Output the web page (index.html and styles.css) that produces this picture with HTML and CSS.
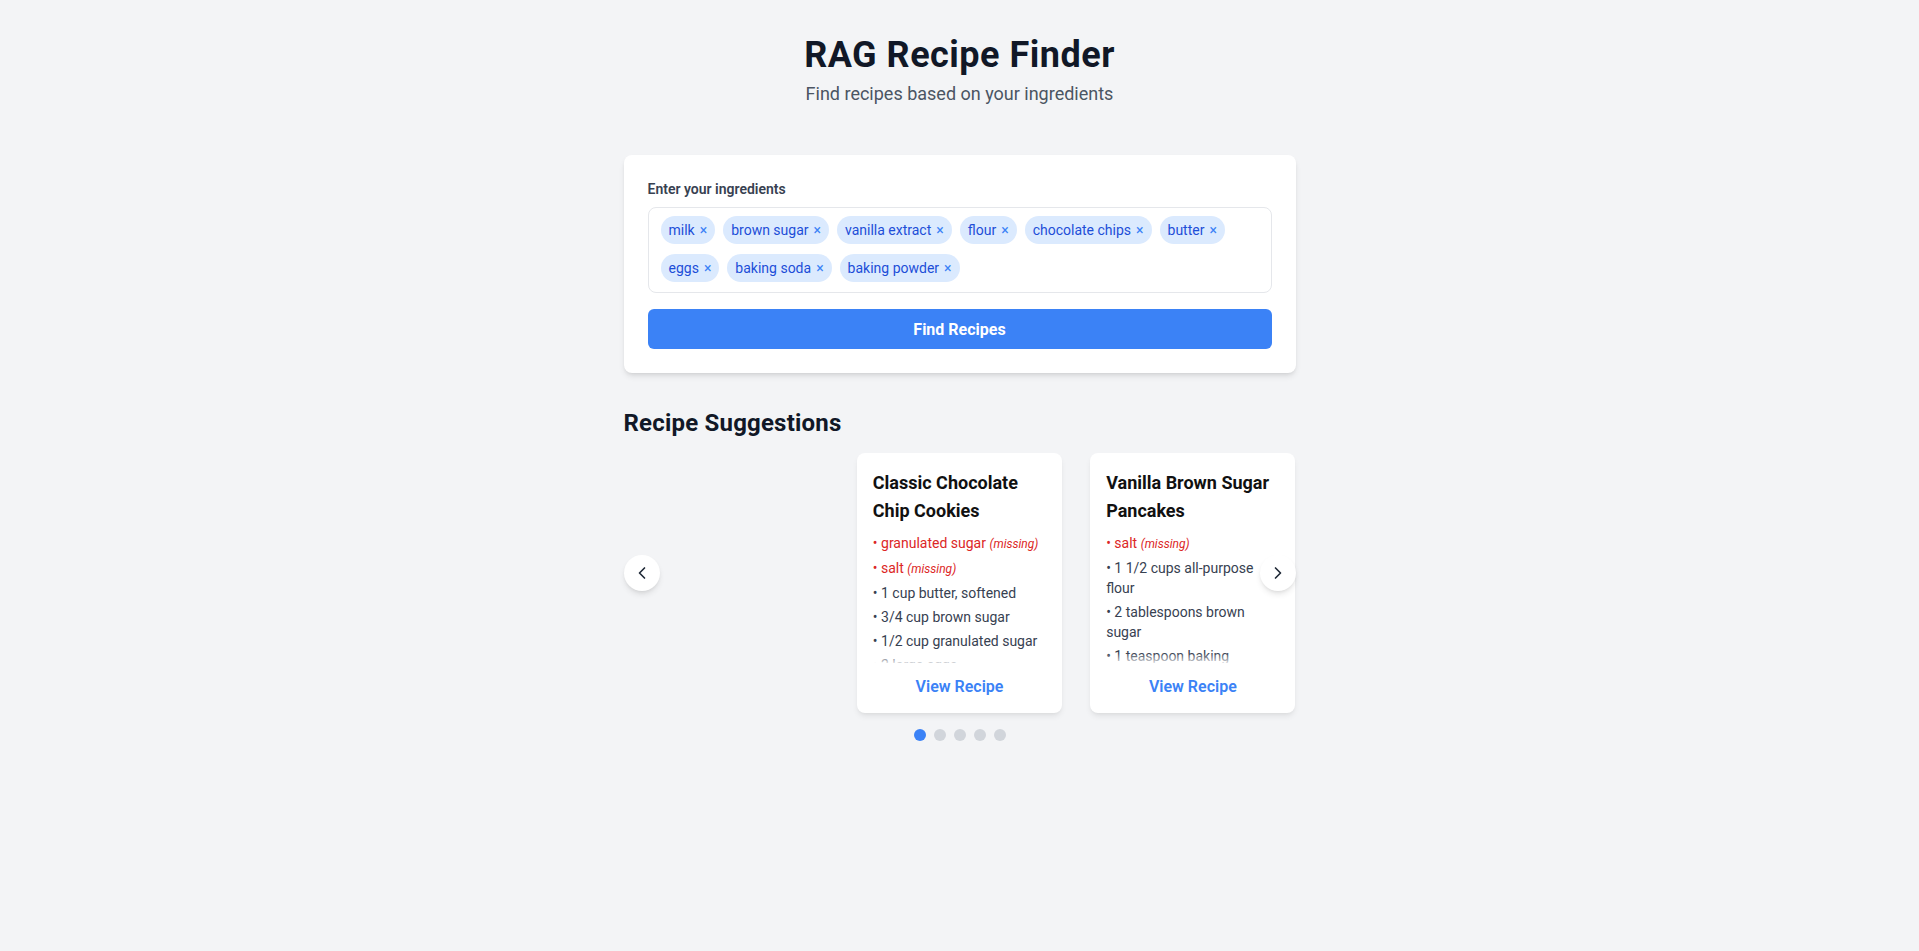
FILE: index.html
```html
<!DOCTYPE html>
<html lang="en">
<head>
<meta charset="utf-8">
<title>RAG Recipe Finder</title>
<link rel="stylesheet" href="styles.css">
</head>
<body>
<main class="page">
  <header class="header">
    <h1 class="title">RAG Recipe Finder</h1>
    <p class="subtitle">Find recipes based on your ingredients</p>
  </header>

  <section class="search-card">
    <label class="label">Enter your ingredients</label>
    <div class="tag-input">
      <span class="chip">milk<span class="chip-x">×</span></span>
      <span class="chip">brown sugar<span class="chip-x">×</span></span>
      <span class="chip">vanilla extract<span class="chip-x">×</span></span>
      <span class="chip">flour<span class="chip-x">×</span></span>
      <span class="chip">chocolate chips<span class="chip-x">×</span></span>
      <span class="chip">butter<span class="chip-x">×</span></span>
      <span class="chip">eggs<span class="chip-x">×</span></span>
      <span class="chip">baking soda<span class="chip-x">×</span></span>
      <span class="chip">baking powder<span class="chip-x">×</span></span>
    </div>
    <button class="find-btn">Find Recipes</button>
  </section>

  <section class="suggestions">
    <h2 class="section-title">Recipe Suggestions</h2>
    <div class="carousel">
      <div class="track">
        <div class="slot"></div>
        <article class="recipe">
          <h3 class="recipe-title">Classic Chocolate Chip Cookies</h3>
          <ul class="ingredients">
            <li class="missing">• granulated sugar <em>(missing)</em></li>
            <li class="missing">• salt <em>(missing)</em></li>
            <li>• 1 cup butter, softened</li>
            <li>• 3/4 cup brown sugar</li>
            <li>• 1/2 cup granulated sugar</li>
            <li>• 2 large eggs</li>
            <li>• 2 teaspoons vanilla extract</li>
          </ul>
          <a class="view-link">View Recipe</a>
        </article>
        <article class="recipe">
          <h3 class="recipe-title">Vanilla Brown Sugar Pancakes</h3>
          <ul class="ingredients">
            <li class="missing">• salt <em>(missing)</em></li>
            <li>• 1 1/2 cups all-purpose flour</li>
            <li>• 2 tablespoons brown sugar</li>
            <li>• 1 teaspoon baking powder</li>
            <li>• 1 cup milk</li>
          </ul>
          <a class="view-link">View Recipe</a>
        </article>
      </div>
      <button class="nav nav-prev" aria-label="Previous">
        <svg width="24" height="24" viewBox="0 0 24 24" fill="none" stroke="#1f2937" stroke-width="2" stroke-linecap="round" stroke-linejoin="round"><path d="M15 18l-6-6 6-6"/></svg>
      </button>
      <button class="nav nav-next" aria-label="Next">
        <svg width="24" height="24" viewBox="0 0 24 24" fill="none" stroke="#1f2937" stroke-width="2" stroke-linecap="round" stroke-linejoin="round"><path d="M9 18l6-6-6-6"/></svg>
      </button>
    </div>
    <div class="dots">
      <span class="dot active"></span>
      <span class="dot"></span>
      <span class="dot"></span>
      <span class="dot"></span>
      <span class="dot"></span>
    </div>
  </section>
</main>
</body>
</html>
```
FILE: styles.css
```css
* { box-sizing: border-box; }

html, body {
  margin: 0;
  padding: 0;
  background: #f3f4f6;
  font-family: "Segoe UI", Roboto, "Liberation Sans", sans-serif;
  color: #111827;
}

.page {
  max-width: 672px;
  margin: 0 auto;
  padding-top: 35px;
}

.header {
  text-align: center;
  margin-bottom: 47px;
}

.title {
  margin: 0 0 5px;
  font-size: 36px;
  line-height: 40px;
  font-weight: 700;
  letter-spacing: 0.5px;
  color: #111827;
}

.subtitle {
  margin: 0;
  font-size: 18px;
  line-height: 28px;
  color: #4b5563;
}

.search-card {
  background: #fff;
  border-radius: 8px;
  padding: 24px;
  box-shadow: 0 4px 6px -1px rgba(0,0,0,0.1), 0 2px 4px -2px rgba(0,0,0,0.1);
}

.label {
  display: block;
  font-size: 14px;
  line-height: 20px;
  font-weight: 600;
  color: #374151;
  margin-bottom: 8px;
}

.tag-input {
  display: flex;
  flex-wrap: wrap;
  column-gap: 8px;
  row-gap: 10px;
  padding: 8px 12px 10px;
  border: 1px solid #e5e7eb;
  border-radius: 8px;
}

.chip {
  display: inline-flex;
  align-items: center;
  height: 28px;
  padding: 0 8px;
  border-radius: 9999px;
  background: #dbeafe;
  color: #1d4ed8;
  font-size: 14px;
  line-height: 20px;
  white-space: pre;
}

.chip-x {
  color: #3b82f6;
  font-size: 14px;
  margin-left: 5px;
}

.find-btn {
  display: block;
  width: 100%;
  height: 40px;
  margin-top: 16px;
  border: 0;
  border-radius: 6px;
  background: #3b82f6;
  color: #fff;
  font-family: inherit;
  font-size: 16px;
  font-weight: 700;
}

.suggestions {
  margin-top: 34px;
}

.section-title {
  margin: 0 0 14px;
  font-size: 24px;
  line-height: 32px;
  font-weight: 700;
  letter-spacing: 0.2px;
  color: #111827;
}

.carousel {
  position: relative;
}

.track {
  display: flex;
  gap: 28px;
}

.slot, .recipe {
  flex: 0 0 calc((100% - 56px) / 3);
}

.recipe {
  height: 260px;
  background: #fff;
  border-radius: 8px;
  padding: 16px 16px 14px;
  box-shadow: 0 4px 6px -1px rgba(0,0,0,0.08), 0 2px 4px -2px rgba(0,0,0,0.06);
  display: flex;
  flex-direction: column;
}

.recipe-title {
  margin: 0 0 8px;
  font-size: 18px;
  line-height: 28px;
  font-weight: 700;
  color: #111;
}

.ingredients {
  position: relative;
  list-style: none;
  margin: 0;
  padding: 0 3px 0 0;
  height: 130px;
  overflow: hidden;
  font-size: 14px;
  line-height: 20px;
  color: #374151;
}

.ingredients::after {
  content: "";
  position: absolute;
  left: 0;
  right: 0;
  bottom: 0;
  height: 10px;
  background: linear-gradient(rgba(255,255,255,0), rgba(255,255,255,0.8));
}

.ingredients li {
  margin-bottom: 4px;
}

.ingredients .missing {
  color: #dc2626;
}

.ingredients em {
  font-size: 12px;
}

.view-link {
  display: block;
  margin-top: 12px;
  text-align: center;
  font-size: 16px;
  line-height: 24px;
  font-weight: 600;
  color: #3b82f6;
}

.nav {
  position: absolute;
  top: 102px;
  width: 36px;
  height: 36px;
  padding: 0;
  border: 0;
  border-radius: 50%;
  background: #fff;
  box-shadow: 0 4px 6px -1px rgba(0,0,0,0.1), 0 2px 4px -2px rgba(0,0,0,0.1);
  display: flex;
  align-items: center;
  justify-content: center;
}

.nav svg { width: 20px; height: 20px; }

.nav-prev { left: 0; }
.nav-next { right: 0; }

.dots {
  display: flex;
  justify-content: center;
  gap: 8px;
  margin-top: 16px;
}

.dot {
  width: 12px;
  height: 12px;
  border-radius: 50%;
  background: #d1d5db;
}

.dot.active { background: #3b82f6; }
```
